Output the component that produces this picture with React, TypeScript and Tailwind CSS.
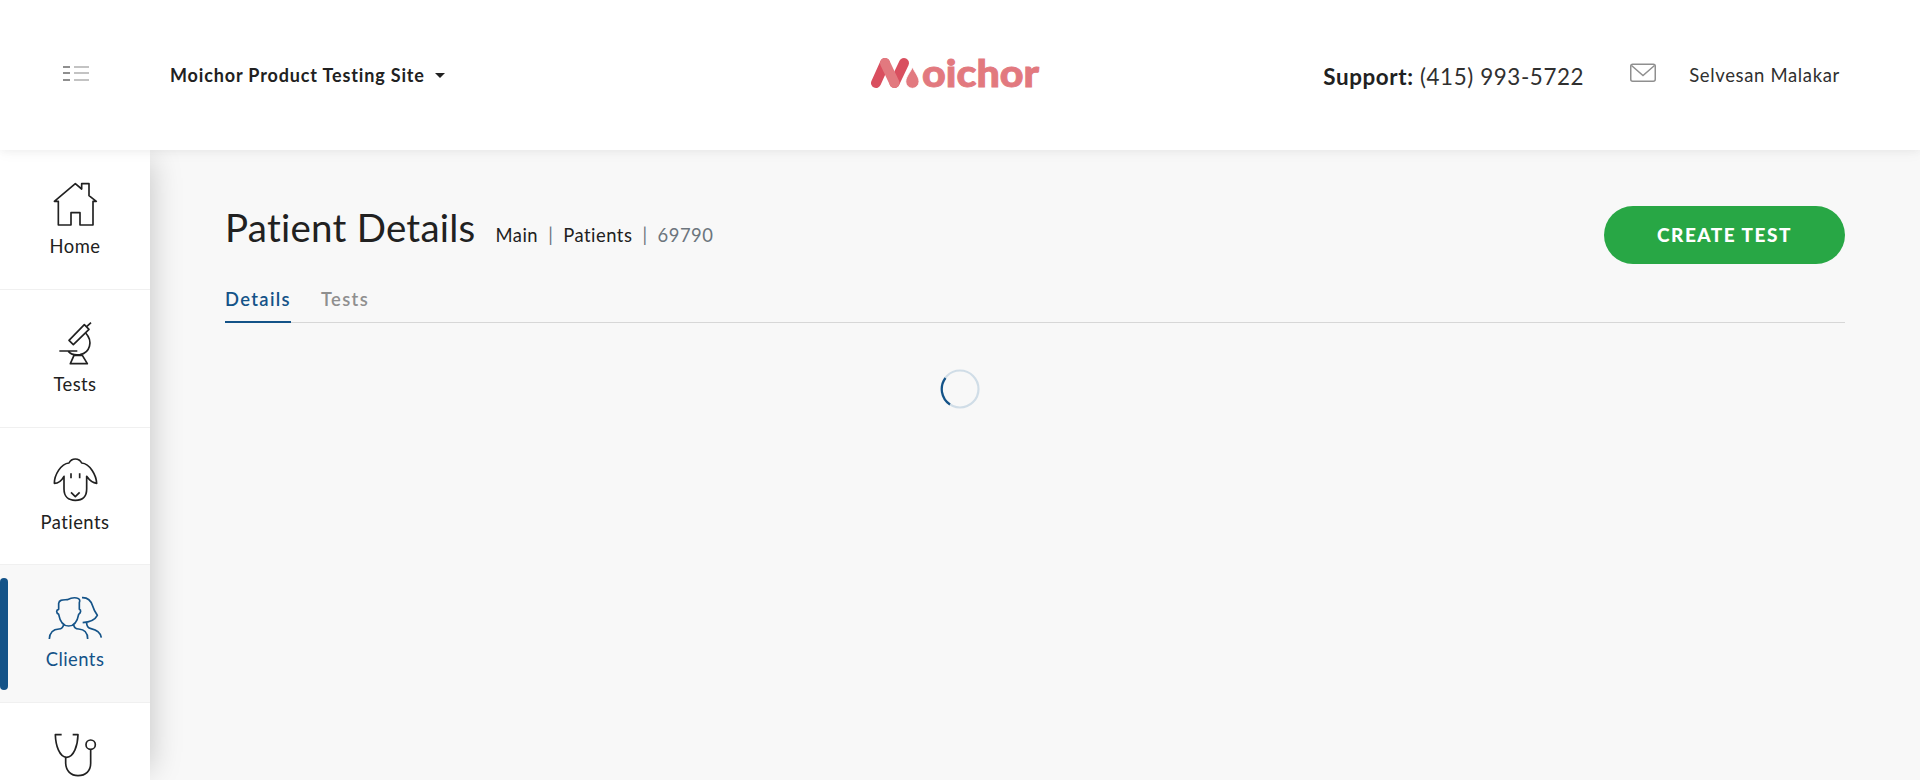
import React from "react";

type NavItem = { name: string; label?: string; active?: boolean; viewBox: string; icon: React.ReactNode };

const navItems: NavItem[] = [
  {
    name: "home",
    label: "Home",
    viewBox: "135 90 180 150",
    icon: (
      <path d="M175 225V154H163L226 101L245 117V101H267V137L289 154H279V225H240V188H213V225Z" />
    ),
  },
  {
    name: "tests",
    label: "Tests",
    viewBox: "135 503 180 150",
    icon: (
      <>
        <path d="M207 570L253 523L267 537L220 583ZM260 529L273 517" />
        <path d="M178 602H232M205 603C214 613 228 615 240 613C270 607 280 573 257 548" />
        <path d="M222 615H247L262 640H211Z" />
      </>
    ),
  },
  {
    name: "patients",
    label: "Patients",
    viewBox: "135 167 180 150",
    icon: (
      <>
        <path d="M192 228C192 242 192 254 192 266C192 288 205 300 226 300C248 300 260 288 260 266V228C267 238 276 248 290 249C289 225 270 190 245 188C237 172 215 172 207 188C182 190 163 225 163 249C176 249 186 239 192 228Z" />
        <path d="M213 219V234M239 219V234M213 276L226 289L239 276" />
      </>
    ),
  },
  {
    name: "clients",
    label: "Clients",
    active: true,
    viewBox: "135 579 180 150",
    icon: (
      <>
        <path d="M176 628V610C178 598 190 600 202 599C212 594 221 592 230 594C239 596 241 601 238 608V628C244 629 243 638 236 643C232 665 222 678 206 678C190 678 180 665 176 643C168 639 168 630 176 628Z" />
        <path d="M148 717C149 697 158 688 177 687C185 687 189 682 191 674M221 674C222 682 227 687 236 687C254 688 263 698 263 717" />
        <path d="M246 593C264 592 273 602 278 618C281 629 286 637 292 646C286 658 273 666 248 668M260 669C260 679 264 684 273 686C291 690 302 699 304 713" />
      </>
    ),
  },
  {
    name: "stethoscope",
    viewBox: "135 992 180 150",
    icon: (
      <>
        <path d="M185 1003H166C167 1035 178 1070 200 1071C222 1070 233 1035 234 1003H218" />
        <path d="M197 1071V1089C198 1112 213 1126 234 1126C257 1126 272 1112 272 1089V1047" />
        <circle cx="272" cy="1033" r="14" />
      </>
    ),
  },
];

function MenuIcon() {
  return (
    <svg width="26" height="16" viewBox="0 0 26 16" fill="none" strokeWidth="2">
      <path d="M0 1H7M0 7H7M0 14H7" stroke="#8f8f8f" />
      <path d="M11 1H26M11 7H26M11 14H26" stroke="#c3c3c3" />
    </svg>
  );
}

function Logo() {
  return (
    <svg width="180" height="50" viewBox="0 -8 180 50" className="block">
      <g fill="none" strokeWidth="10" strokeLinecap="round">
        <path d="M6 26L15 6" stroke="#d94f5f" />
        <path d="M24.500 26L34 6" stroke="#d94f5f" />
        <path d="M15 6L24.500 26" stroke="#e2797f" />
      </g>
      <path
        d="M42.500 10C44 14.500 49 19.500 49 24.700A6.500 6.500 0 0 1 35.800 24.700C35.800 19.500 41 14.500 42.500 10Z"
        fill="#e2797f"
        stroke="#fff"
        strokeWidth="0.800"
      />
      <text
        x="52"
        y="30"
        textLength="117"
        lengthAdjust="spacingAndGlyphs"
        className="fill-[#e2797f] stroke-[#e2797f] font-['Lato',sans-serif] text-[38.500px] font-black"
        strokeWidth="0.900"
      >
        oichor
      </text>
    </svg>
  );
}

function Header() {
  return (
    <header className="relative z-20 flex h-[150px] shrink-0 items-center bg-white pb-[2px] shadow-[0_1px_15px_rgba(0,0,0,0.05),0_1px_8px_rgba(0,0,0,0.04)]">
      <div className="flex w-[870px] items-center">
        <button className="ml-[63px] block" aria-label="Menu">
          <MenuIcon />
        </button>
        <button className="ml-[81px] flex items-center gap-[10px] pt-[2px] text-[18px] leading-[27px] font-bold tracking-[0.850px]">
          Moichor Product Testing Site
          <span className="mt-[1px] border-x-[5px] border-t-[5px] border-x-transparent border-t-[#212121]" />
        </button>
      </div>
      <Logo />
      <div className="flex flex-1 items-center justify-end pr-[80px]">
        <p className="mt-[6px] text-[22.400px] leading-[34px] tracking-[0.6px]">
          <b className="font-bold">Support:</b> <span className="text-[#303030]">(415) 993-5722</span>
        </p>
        <svg width="26" height="20" viewBox="0 0 26 20" fill="none" stroke="#8f8f8f" strokeWidth="1.500" className="mb-[2px] ml-[46px]">
          <rect x="0.750" y="1.250" width="24.500" height="17" rx="2" />
          <path d="M1.500 2.500L13 12.500L24.500 2.500" />
        </svg>
        <span className="ml-[33px] pt-[2px] text-[18.500px] leading-[27px] tracking-[0.650px] text-[#303030]">Selvesan Malakar</span>
      </div>
    </header>
  );
}

function Sidebar() {
  return (
    <aside className="z-10 w-[150px] shrink-0 bg-white pt-[2.300px] shadow-[10px_0_30px_-10px_rgba(0,0,0,0.22)]">
      {navItems.map((item) => (
        <a
          key={item.name}
          className={
            item.active
              ? "relative flex h-[137.700px] flex-col items-center border-b border-[#f0f0f0] bg-[#f8f8f8] pt-[28px] text-[#145388]"
              : "relative flex h-[137.700px] flex-col items-center border-b border-[#f0f0f0] pt-[28px] text-[#212121]"
          }
        >
          {item.active && <span className="absolute top-[13px] left-0 h-[112px] w-[8px] rounded-[4px] bg-[#145388]" />}
          <svg
            width="60"
            height="50"
            viewBox={item.viewBox}
            fill="none"
            stroke="currentColor"
            strokeWidth="5"
            strokeLinejoin="round"
          >
            {item.icon}
          </svg>
          {item.label && (
            <span className="mt-[3px] text-[18.400px] leading-[27px] tracking-[0.450px]">{item.label}</span>
          )}
        </a>
      ))}
    </aside>
  );
}

function Content() {
  return (
    <main className="flex flex-1 flex-col pt-[54px] pr-[75px] pl-[75px]">
      <div className="flex h-[60px] items-start justify-between">
        <div className="flex items-baseline">
          <h1 className="text-[38.500px] leading-[46px] tracking-[0.250px]">Patient Details</h1>
          <nav className="ml-[20px] flex gap-[10px] text-[18.400px] tracking-[0.500px]">
            <span>Main</span>
            <span className="text-[#6c757d]">|</span>
            <span>Patients</span>
            <span className="text-[#6c757d]">|</span>
            <span className="text-[#6c757d]">69790</span>
          </nav>
        </div>
        <button className="mt-[2px] h-[58px] w-[241px] rounded-full bg-[#28a745] pt-[1px] text-[19px] font-black tracking-[1.500px] text-white">
          CREATE TEST
        </button>
      </div>
      <div className="mt-[21px] flex h-[38px] gap-[30px] border-b border-[#d7d7d7] text-[18.400px] leading-[28px] font-semibold tracking-[1.350px]">
        <span className="h-[38px] border-b-2 border-[#145388] text-[#145388]">Details</span>
        <span className="text-[#8f8f8f]">Tests</span>
      </div>
      <svg width="40" height="40" viewBox="0 0 40 40" fill="none" strokeWidth="2.200" className="mt-[46px] ml-[715px]">
        <circle cx="20" cy="20" r="18.500" stroke="#d0dde7" />
        <path d="M5.500 9A18.500 18.500 0 0 0 10 35.500" stroke="#145388" />
      </svg>
    </main>
  );
}

export default function App() {
  return (
    <div className="flex h-[780px] w-[1920px] flex-col overflow-hidden bg-[#f8f8f8] font-['Lato','Liberation_Sans',sans-serif] text-[#212121]">
      <Header />
      <div className="flex min-h-0 flex-1">
        <Sidebar />
        <Content />
      </div>
    </div>
  );
}
